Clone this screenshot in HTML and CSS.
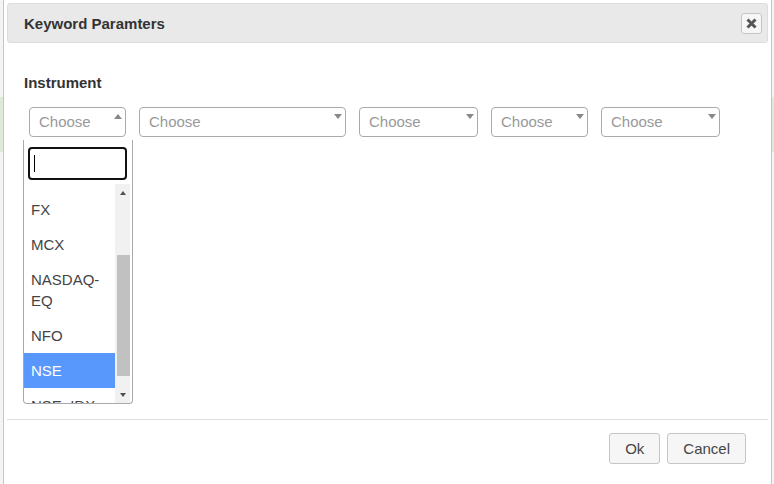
FILE: index.html
```html
<!DOCTYPE html>
<html lang="en">
<head>
    <meta charset="UTF-8">
    <title>Keyword Paramters</title>
    <link rel="stylesheet" href="styles.css">
</head>
<body>
    <div class="dialog">
        <div class="titlebar">
            <span class="title">Keyword Paramters</span>
            <button class="close" title="Close">
                <svg width="11" height="11" viewBox="0 0 11 11">
                    <path d="M1.5 1.5 L9.5 9.5 M9.5 1.5 L1.5 9.5" stroke="#555" stroke-width="3" fill="none"/>
                </svg>
            </button>
        </div>

        <div class="content">
            <div class="label">Instrument</div>
            <div class="selects">
                <div class="select open" style="width: 97px">
                    <span class="placeholder">Choose</span>
                    <b class="arrow"></b>
                    <div class="dropdown">
                        <div class="search"><span class="caret"></span></div>
                        <div class="results">
                            <ul class="options">
                                <li>FX</li>
                                <li>MCX</li>
                                <li>NASDAQ-EQ</li>
                                <li>NFO</li>
                                <li class="active">NSE</li>
                                <li>NSE_IDX</li>
                            </ul>
                            <div class="scrollbar">
                                <div class="sb-btn"><i class="tri-up"></i></div>
                                <div class="thumb"></div>
                                <div class="sb-rest"></div>
                                <div class="sb-btn"><i class="tri-down"></i></div>
                            </div>
                        </div>
                    </div>
                </div>
                <div class="select" style="width: 207px">
                    <span class="placeholder">Choose</span>
                    <b class="arrow"></b>
                </div>
                <div class="select" style="width: 119px">
                    <span class="placeholder">Choose</span>
                    <b class="arrow"></b>
                </div>
                <div class="select" style="width: 97px">
                    <span class="placeholder">Choose</span>
                    <b class="arrow"></b>
                </div>
                <div class="select" style="width: 119px">
                    <span class="placeholder">Choose</span>
                    <b class="arrow"></b>
                </div>
            </div>
        </div>

        <div class="buttons">
            <button>Ok</button>
            <button>Cancel</button>
        </div>
    </div>
</body>
</html>
```

FILE: styles.css
```css
body {
    margin: 0;
    height: 484px;
    overflow: hidden;
    font-family: "Liberation Sans", Arial, sans-serif;
    background: linear-gradient(to bottom, transparent 97px, #dfe9d8 97px, #dfe9d8 152px, transparent 152px), #f4f4f4;
}

.dialog {
    box-sizing: border-box;
    width: 769px;
    height: 490px;
    margin-left: 3px;
    padding: 3px;
    border: 1px solid #c5c5c5;
    border-top: 0;
    background: #fff;
}

.titlebar {
    box-sizing: border-box;
    height: 40px;
    display: flex;
    align-items: center;
    padding: 0 5px 0 16px;
    border: 1px solid #ddd;
    border-radius: 3px;
    background: #e9e9e9;
}

.title {
    font-size: 15px;
    font-weight: bold;
    color: #333;
}

.close {
    box-sizing: border-box;
    width: 21px;
    height: 21px;
    margin-left: auto;
    padding: 0;
    display: flex;
    align-items: center;
    justify-content: center;
    border: 1px solid #c5c5c5;
    border-radius: 3px;
    background: #f6f6f6;
}

.content {
    box-sizing: border-box;
    height: 376px;
    padding: 31px 17px 0;
}

.label {
    font-size: 15px;
    font-weight: bold;
    line-height: 17px;
    color: #333;
}

.selects {
    display: flex;
    gap: 13px;
    margin-top: 16px;
    padding-left: 5px;
}

.select {
    box-sizing: border-box;
    height: 30px;
    position: relative;
    display: flex;
    padding-left: 9px;
    border: 1px solid #aaa;
    border-radius: 4px;
    font-size: 15px;
    line-height: 28px;
    color: #999;
}

.arrow {
    width: 0;
    height: 0;
    margin: 6px 3px 0 auto;
    border-style: solid;
    border-width: 5px 4px 0;
    border-color: #888 transparent transparent;
}

.open .arrow {
    border-width: 0 4px 5px;
    border-color: transparent transparent #888;
}

.dropdown {
    box-sizing: border-box;
    position: absolute;
    top: calc(100% + 4px);
    left: -7px;
    width: 110px;
    padding-top: 7px;
    border: 1px solid #aaa;
    border-top: 0;
    border-radius: 0 0 4px 4px;
    background: #fff;
}

.search {
    box-sizing: border-box;
    height: 33px;
    margin: 0 5px 0 4px;
    padding-left: 4px;
    display: flex;
    align-items: center;
    border: 2px solid #111;
    border-radius: 4px;
}

.caret {
    width: 1px;
    height: 17px;
    background: #000;
}

.results {
    display: flex;
    height: 219px;
    margin: 4px 2px 0 0;
    overflow: hidden;
}

.options {
    width: 91px;
    margin: 0;
    padding: 8px 0 0;
    list-style: none;
    font-size: 15px;
    line-height: 21px;
    color: #444;
}

.options li {
    padding: 7px;
}

.options li.active {
    background: #5897fb;
    color: #fff;
}

.scrollbar {
    width: 15px;
    display: flex;
    flex-direction: column;
    background: #f1f1f1;
}

.sb-btn {
    height: 17px;
    display: flex;
    align-items: center;
    justify-content: center;
}

.tri-up, .tri-down {
    width: 0;
    height: 0;
    border-style: solid;
}

.tri-up {
    border-width: 0 3px 4px;
    border-color: transparent transparent #505050;
}

.tri-down {
    border-width: 4px 3px 0;
    border-color: #505050 transparent transparent;
}

.thumb {
    width: 13px;
    height: 121px;
    margin: 54px 0 0 2px;
    background: #c1c1c1;
}

.sb-rest {
    flex: 1;
}

.buttons {
    display: flex;
    justify-content: flex-end;
    gap: 7px;
    padding: 13px 22px 0 0;
    border-top: 1px solid #ddd;
}

.buttons button {
    padding: 6px 15px;
    border: 1px solid #c5c5c5;
    border-radius: 3px;
    background: #f6f6f6;
    font-family: "Liberation Sans", Arial, sans-serif;
    font-size: 15px;
    line-height: 17px;
    color: #454545;
}
```
